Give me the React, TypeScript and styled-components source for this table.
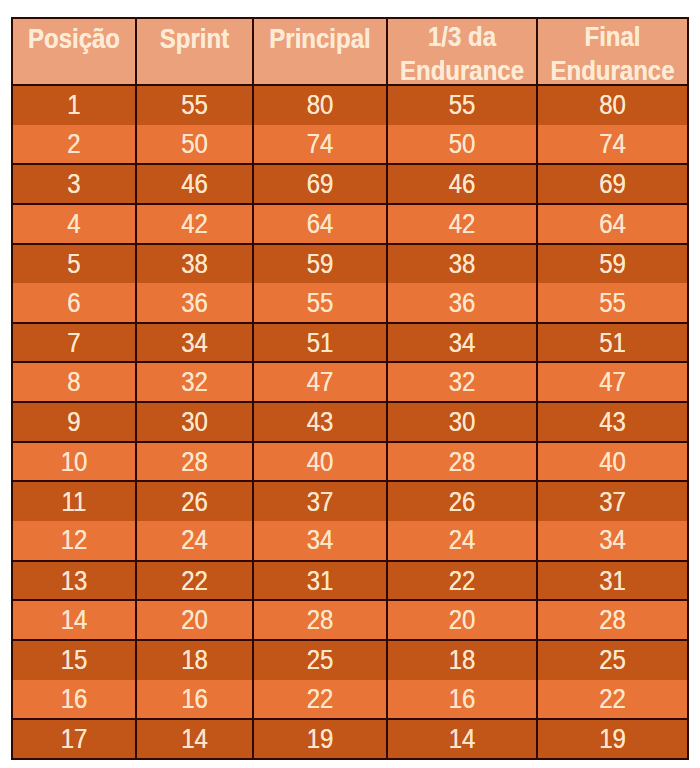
import React from 'react';
import styled, { createGlobalStyle } from 'styled-components';

const GlobalStyle = createGlobalStyle`
  body {
    margin: 0;
    background: #ffffff;
    font-family: 'Liberation Sans', Arial, sans-serif;
  }
`;

const FONT = `'Liberation Sans', Arial, Helvetica, sans-serif`;

const COLUMN_WIDTHS = [124, 117, 134, 150, 151];

const HEADERS = ['Posição', 'Sprint', 'Principal', '1/3 da Endurance', 'Final Endurance'];

// pontos por posição: sprint, principal, 1/3 endurance, final endurance
const POINTS: number[][] = [
  [55, 80, 55, 80],
  [50, 74, 50, 74],
  [46, 69, 46, 69],
  [42, 64, 42, 64],
  [38, 59, 38, 59],
  [36, 55, 36, 55],
  [34, 51, 34, 51],
  [32, 47, 32, 47],
  [30, 43, 30, 43],
  [28, 40, 28, 40],
  [26, 37, 26, 37],
  [24, 34, 24, 34],
  [22, 31, 22, 31],
  [20, 28, 20, 28],
  [18, 25, 18, 25],
  [16, 22, 16, 22],
  [14, 19, 14, 19],
];

// the source image leaves out a few of the horizontal rules
const UNRULED = new Set([2, 6, 12, 16]);

export default function App() {
  return (
    <>
      <GlobalStyle />
      <SPage>
        <STable>
          <colgroup>
            {COLUMN_WIDTHS.map((w, i) => (
              <col key={i} style={{ width: w }} />
            ))}
          </colgroup>
          <thead>
            <tr>
              {HEADERS.map((h) => (
                <SHeadCell key={h}>
                  <SStretch>{h}</SStretch>
                </SHeadCell>
              ))}
            </tr>
          </thead>
          <tbody>
            {POINTS.map((row, i) => {
              const pos = i + 1;
              return (
                <SRow key={pos} $dark={pos % 2 === 1} $ruled={!UNRULED.has(pos)}>
                  {[pos, ...row].map((v, j) => (
                    <SCell key={j}>
                      <SStretch>{v}</SStretch>
                    </SCell>
                  ))}
                </SRow>
              );
            })}
          </tbody>
        </STable>
      </SPage>
    </>
  );
}

const SPage = styled.div`
  padding: 17px 0 0 11px;
`;

const STable = styled.table`
  border-collapse: collapse;
  table-layout: fixed;
  width: 676px;
  border: 2px solid #2e0900;
  color: #fde6cc;
  font-family: ${FONT};
`;

// the source picture is slightly stretched vertically
const SStretch = styled.span`
  display: inline-block;
  font-family: ${FONT};
  transform: scaleY(1.12);
  text-shadow: 0 0 0.6px currentColor;
`;

const SHeadCell = styled.th`
  height: 66px;
  padding: 5px 2px 0;
  box-sizing: border-box;
  vertical-align: top;
  background: #eba17b;
  border-left: 2px solid #2e0900;
  border-bottom: 2px solid #2e0900;
  font-family: ${FONT};
  font-size: 24px;
  font-weight: 700;
  line-height: 30px;
  text-align: center;
  color: #fdebd6;
`;

const SRow = styled.tr<{ $dark: boolean; $ruled: boolean }>`
  height: 39.65px;
  background: ${({ $dark }) => ($dark ? '#c25619' : '#e87537')};
  border-top: ${({ $ruled }) => ($ruled ? '2px solid #2e0900' : 'none')};
`;

const SCell = styled.td`
  padding: 0;
  border-left: 2px solid #2e0900;
  font-family: ${FONT};
  font-size: 24px;
  line-height: 28px;
  text-align: center;
  vertical-align: middle;
`;
